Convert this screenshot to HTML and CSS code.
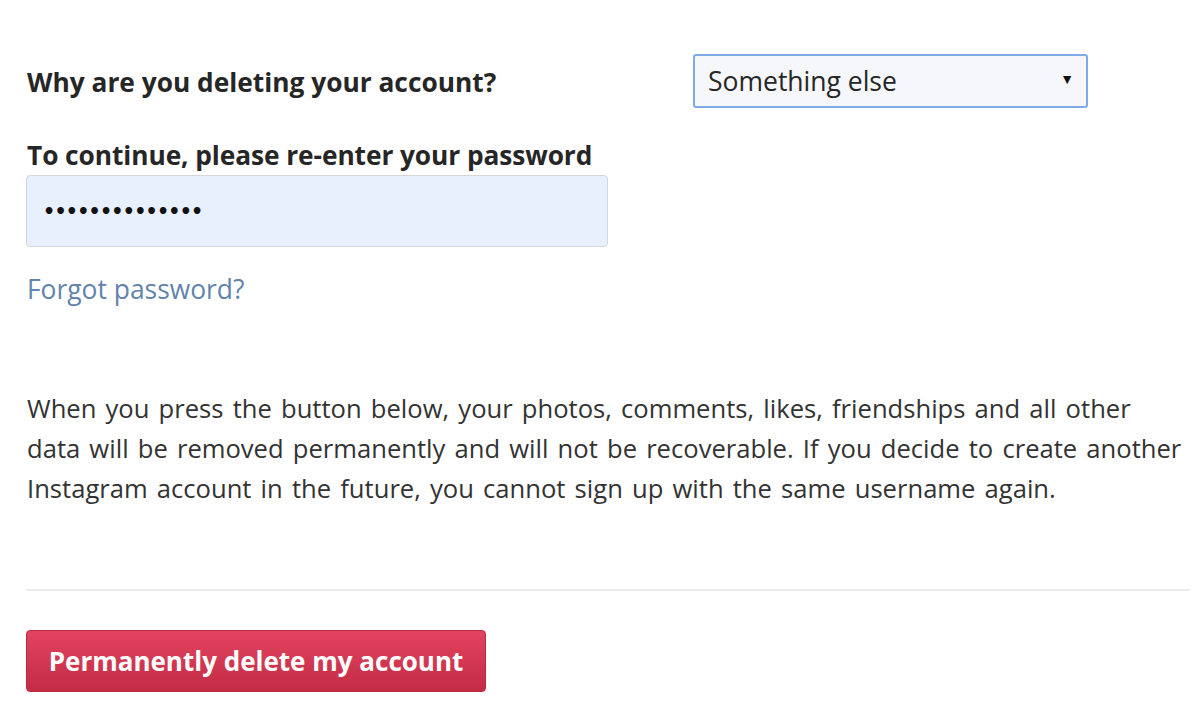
FILE: index.html
```html
<!DOCTYPE html>
<html>
<head>
<meta charset="utf-8">
<link rel="stylesheet" href="styles.css">
</head>
<body>
<main class="page">
  <div class="reason-row">
    <label class="label">Why are you deleting your account?</label>
    <div class="select">
      <span class="select-text">Something else</span>
      <span class="select-arrow">▼</span>
    </div>
  </div>
  <div class="pw-group">
    <label class="label">To continue, please re-enter your password</label>
    <div class="pw-input"><span class="dots">••••••••••••••</span></div>
    <a class="forgot">Forgot password?</a>
  </div>
  <p class="notice">When you press the button below, your photos, comments, likes, friendships and all other data will be removed permanently and will not be recoverable. If you decide to create another Instagram account in the future, you cannot sign up with the same username again.</p>
  <hr class="divider">
  <button class="delete-btn">Permanently delete my account</button>
</main>
</body>
</html>
```
FILE: styles.css
```css
html, body {
  margin: 0;
  padding: 0;
  background: #ffffff;
}
body {
  font-family: "Open Sans", "Noto Sans", sans-serif;
  color: #262626;
  width: 1200px;
  height: 714px;
  overflow: hidden;
}
.page {
  padding: 54px 10px 0 26px;
}
.reason-row {
  display: grid;
  grid-template-columns: 667px 395px;
  align-items: center;
  height: 54px;
}
.label {
  font-weight: 700;
  font-size: 26.3px;
  line-height: 34px;
  color: #262626;
  padding-left: 1px;
  padding-top: 1px;
}
.pw-group .label {
  letter-spacing: -0.08px;
}
.select {
  box-sizing: border-box;
  height: 54px;
  border: 2px solid #7eaae6;
  border-radius: 3px;
  background: #f5f7fa;
  display: flex;
  align-items: center;
  justify-content: space-between;
  padding: 0 12px 0 13px;
}
.select-text {
  font-size: 26.5px;
  line-height: 34px;
  color: #262626;
}
.select-arrow {
  font-size: 14px;
  color: #111;
  margin-top: -6px;
}
.pw-group {
  margin-top: 29px;
  display: flex;
  flex-direction: column;
  align-items: flex-start;
}
.pw-input {
  box-sizing: border-box;
  margin-top: 3px;
  width: 582px;
  height: 72px;
  background: #e8f0fe;
  border: 1px solid #d3d6db;
  border-radius: 4px;
  display: flex;
  align-items: center;
  padding-left: 16px;
}
.dots {
  font-size: 19px;
  letter-spacing: -0.75px;
  color: #111;
  font-family: "DejaVu Sans", sans-serif;
  font-weight: 700;
}
.forgot {
  margin-top: 25px;
  font-size: 26.4px;
  line-height: 34px;
  color: #6283ad;
  padding-left: 1px;
}
.notice {
  margin: 83px 0 0;
  max-width: 1160px;
  font-size: 25.6px;
  word-spacing: 2.5px;
  line-height: 40px;
  color: #333;
  padding-left: 1px;
}
.divider {
  margin: 80px 0 0;
  border: 0;
  border-top: 2px solid #e9e9e9;
}
.delete-btn {
  margin-top: 39px;
  width: 460px;
  height: 62px;
  border: 1px solid #b72a42;
  border-radius: 4px;
  background: linear-gradient(#e3445f, #c42b45);
  color: #fff;
  font-family: "Open Sans", "Noto Sans", sans-serif;
  font-weight: 700;
  font-size: 26px;
  padding: 0;
}
```
